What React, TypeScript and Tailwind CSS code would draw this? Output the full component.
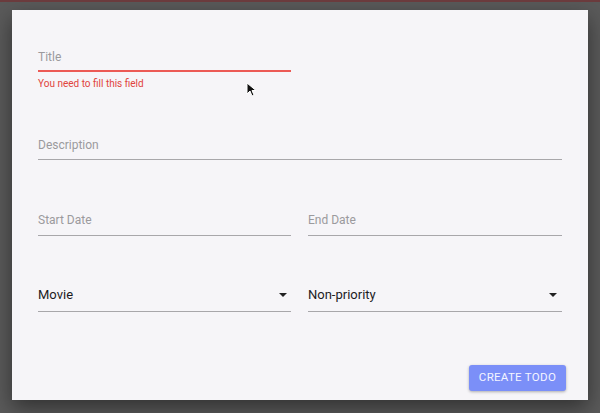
export default function App() {
  return (
    <div
      className="relative h-[413px] w-[600px] overflow-hidden border-t-2 border-[#6b3b3d] bg-[#5a5a5a] pt-[8px] pl-[12px]"
      style={{ fontFamily: "Roboto, 'Noto Sans', sans-serif" }}
    >
      <div className="flex h-[390px] w-[576px] flex-col bg-[#f6f5f8] px-[26px] pt-[39px] shadow-[0_8px_20px_rgba(0,0,0,0.45)]">
        {/* Title, with error */}
        <div className="flex w-[253px] flex-col">
          <span className="text-[12px] leading-[16px] text-[#9b9a9d]">Title</span>
          <div className="mt-[5px] h-[2px] bg-[#ec5a55]" />
          <span className="mt-[6px] text-[10px] leading-[12px] text-[#e1443d]">You need to fill this field</span>
        </div>

        <div className="mt-[47px] border-b border-[#a8a7aa] pb-[6px]">
          <span className="block text-[12px] leading-[16px] text-[#9b9a9d]">Description</span>
        </div>

        <div className="mt-[52px] flex gap-[17px]">
          <div className="w-[253px] border-b border-[#a8a7aa] pb-[7px]">
            <span className="block text-[12px] leading-[16px] text-[#9b9a9d]">Start Date</span>
          </div>
          <div className="flex-1 border-b border-[#a8a7aa] pb-[7px]">
            <span className="block text-[12px] leading-[16px] text-[#9b9a9d]">End Date</span>
          </div>
        </div>

        <div className="mt-[51px] flex gap-[17px]">
          <div className="flex w-[253px] items-center justify-between border-b border-[#a8a7aa] pb-[8px]">
            <span className="block text-[13px] leading-[16px] text-[#1c1c1e]">Movie</span>
            <svg width="8" height="4" viewBox="0 0 8 4" className="mr-[4px]">
              <path d="M0 0h8L4 4z" fill="#222" />
            </svg>
          </div>
          <div className="flex flex-1 items-center justify-between border-b border-[#a8a7aa] pb-[8px]">
            <span className="block text-[13px] leading-[16px] text-[#1c1c1e]">Non-priority</span>
            <svg width="8" height="4" viewBox="0 0 8 4" className="mr-[5px]">
              <path d="M0 0h8L4 4z" fill="#222" />
            </svg>
          </div>
        </div>

        <div className="mt-[53px] flex justify-end">
          <button className="mr-[-4px] h-[26px] w-[97px] rounded-[3px] bg-[#7b8ff8] text-[11.5px] tracking-[0.3px] text-[#f4f5ff] shadow-[0_1px_3px_rgba(0,0,0,0.3)]">
            CREATE TODO
          </button>
        </div>
      </div>

      {/* mouse pointer */}
      <svg className="absolute left-[246px] top-[80px]" width="11" height="15" viewBox="0 0 11 15">
        <path d="M1 1v11l3-3 2 5 2-1-2-4.5h4z" fill="#111" stroke="#fff" strokeWidth="1" />
      </svg>
    </div>
  )
}
